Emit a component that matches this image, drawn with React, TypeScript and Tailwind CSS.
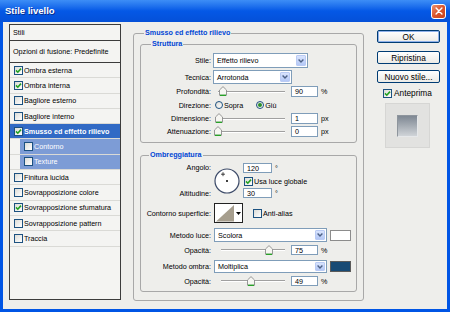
import React from "react";

function Check({ checked = false }: { checked?: boolean }) {
  return (
    <span className="relative inline-flex shrink-0 w-[9px] h-[9px] border border-[#1C5180] bg-gradient-to-br from-[#DCDCD7] to-white">
      {checked && (
        <svg viewBox="0 0 7 7" className="absolute left-0 top-0 w-[7px] h-[7px]">
          <path d="M1 3.4 L2.8 5.2 L6 1.6" fill="none" stroke="#21A121" strokeWidth="1.6" />
        </svg>
      )}
    </span>
  );
}

function Radio({ on = false }: { on?: boolean }) {
  return (
    <span className="inline-flex shrink-0 w-[8px] h-[8px] rounded-full border border-[#1C5180] bg-gradient-to-br from-[#DCDCD7] to-white items-center justify-center">
      {on && <span className="w-[4px] h-[4px] rounded-full bg-[#2A8F2A]" />}
    </span>
  );
}

function Dropdown({ text, cls }: { text: string; cls: string }) {
  return (
    <div className={`flex items-stretch bg-white border border-[#7F9DB9] ${cls}`}>
      <span className="flex-1 flex items-center pl-[3px] whitespace-nowrap overflow-hidden">{text}</span>
      <span className="w-[10px] m-[1px] flex items-center justify-center rounded-[1px] bg-gradient-to-b from-[#D9E4FD] to-[#B4C8F6] border border-[#BACBF4]">
        <svg viewBox="0 0 6 4" className="w-[6px] h-[4px]">
          <path d="M0.6 0.6 L3 3 L5.4 0.6" stroke="#4D6185" strokeWidth="1.4" fill="none" />
        </svg>
      </span>
    </div>
  );
}

function Slider({ cls, pos }: { cls: string; pos: number }) {
  return (
    <div className={`relative h-full shrink-0 ${cls}`}>
      <div className="absolute left-[3px] right-0 top-1/2 -mt-px h-[2px] border-t border-[#A0A0A0] border-b border-b-white" />
      <svg className="absolute top-0 w-[8px] h-[10px]" style={{ left: pos - 4 }} viewBox="0 0 8 10">
        <path d="M0.5 9.3 V4 L4 0.6 L7.5 4 V9.3 Z" fill="#F6F6F2" stroke="#8C8C8C" strokeWidth="0.9" />
        <path d="M1 9.3 H7" stroke="#21A121" strokeWidth="1.3" />
      </svg>
    </div>
  );
}

function Num({ v, cls }: { v: string; cls: string }) {
  return (
    <div className={`flex items-center shrink-0 bg-white border border-[#7F9DB9] pl-[3px] ${cls}`}>{v}</div>
  );
}

function Label({ children }: { children: React.ReactNode }) {
  return <div className="w-[70px] shrink-0 text-right whitespace-nowrap">{children}</div>;
}

const items: { t: string; c?: boolean; sel?: boolean; sub?: boolean }[] = [
  { t: "Ombra esterna", c: true },
  { t: "Ombra interna", c: true },
  { t: "Bagliore esterno" },
  { t: "Bagliore interno" },
  { t: "Smusso ed effetto rilievo", c: true, sel: true },
  { t: "Contorno", sub: true },
  { t: "Texture", sub: true },
  { t: "Finitura lucida" },
  { t: "Sovrapposizione colore" },
  { t: "Sovrapposizione sfumatura", c: true },
  { t: "Sovrapposizione pattern" },
  { t: "Traccia" },
];

function LeftPanel() {
  return (
    <div className="w-[112px] h-[276px] shrink-0 border border-[#3C3C3C] bg-[#F4F4F2] flex flex-col">
      <div className="h-[16px] shrink-0 flex items-center pl-[3px] border-b border-[#3C3C3C]">Stili</div>
      <div className="h-[22px] shrink-0 flex items-center pl-[3px] border-b border-[#3C3C3C] whitespace-nowrap">
        Opzioni di fusione: Predefinite
      </div>
      {items.map((it) =>
        it.sub ? (
          <div key={it.t} className="h-[15.3px] shrink-0 flex pl-[10px] border-b border-[#DADAD6]">
            <div className="flex-1 flex items-center gap-[1px] pl-[4px] bg-[#7D9CD6] text-white">
              <Check checked={it.c} />
              <span>{it.t}</span>
            </div>
          </div>
        ) : (
          <div
            key={it.t}
            className={
              it.sel
                ? "h-[15.3px] shrink-0 flex items-center gap-[1px] pl-[4px] bg-[#316AC5] text-white font-bold border-b border-[#DADAD6] whitespace-nowrap"
                : "h-[15.3px] shrink-0 flex items-center gap-[1px] pl-[4px] border-b border-[#DADAD6] whitespace-nowrap"
            }
          >
            <Check checked={it.c} />
            <span>{it.t}</span>
          </div>
        )
      )}
    </div>
  );
}

function AngleDial() {
  return (
    <svg viewBox="0 0 26 26" className="w-[26px] h-[26px] shrink-0 mt-[7px] ml-[3px]">
      <circle cx="13" cy="13" r="12" fill="#FFFFFF" stroke="#3D4B69" strokeWidth="1.2" />
      <circle cx="13" cy="13" r="1" fill="#000" />
      <path d="M9 4.2 V8.2 M7 6.2 H11" stroke="#000" strokeWidth="0.7" />
    </svg>
  );
}

function ContourBox() {
  return (
    <div className="ml-[3px] w-[29px] h-[20px] shrink-0 border border-[#222] bg-white flex">
      <svg viewBox="0 0 20 18" className="w-[20px] h-[18px]">
        <path d="M1 17.5 L19 1 V17.5 Z" fill="#A69E8E" />
      </svg>
      <div className="flex-1 flex items-center justify-center">
        <svg viewBox="0 0 5 3" className="w-[5px] h-[3px]">
          <path d="M0 0 H5 L2.5 3 Z" fill="#000" />
        </svg>
      </div>
    </div>
  );
}

function Middle() {
  return (
    <fieldset className="mt-[4px] ml-[12px] w-[231px] shrink-0 border border-[#A8A8A8] rounded-[3px] px-[6px] pb-[8px]">
      <legend className="ml-[4px] px-[1px] leading-[10px] font-bold text-[#0046D5]">Smusso ed effetto rilievo</legend>

      <fieldset className="mt-[1px] border border-[#A8A8A8] rounded-[3px] px-0 pt-[4px] pb-[5px]">
        <legend className="ml-[10px] px-[1px] leading-[10px] font-bold text-[#0046D5]">Struttura</legend>
        <div className="flex items-center h-[15px]">
          <Label>Stile:</Label>
          <Dropdown text="Effetto rilievo" cls="ml-[2px] w-[95px] h-[15px]" />
        </div>
        <div className="flex items-center h-[14px] mt-[2px]">
          <Label>Tecnica:</Label>
          <Dropdown text="Arrotonda" cls="ml-[2px] w-[79px] h-[14px]" />
        </div>
        <div className="flex items-center h-[11px] mt-[2px]">
          <Label>Profondità:</Label>
          <Slider cls="ml-[4px] w-[70px]" pos={8} />
          <Num v="90" cls="ml-[6px] w-[27px] h-[11px]" />
          <span className="ml-[3px]">%</span>
        </div>
        <div className="flex items-center h-[12px] mt-[2px]">
          <Label>Direzione:</Label>
          <span className="ml-[4px] flex items-center gap-[1px]">
            <Radio />
            <span>Sopra</span>
          </span>
          <span className="ml-[13px] flex items-center gap-[1px]">
            <Radio on />
            <span>Giù</span>
          </span>
        </div>
        <div className="flex items-center h-[11px] mt-[2px]">
          <Label>Dimensione:</Label>
          <Slider cls="ml-[4px] w-[70px]" pos={4} />
          <Num v="1" cls="ml-[6px] w-[27px] h-[11px]" />
          <span className="ml-[3px]">px</span>
        </div>
        <div className="flex items-center h-[11px] mt-[2px]">
          <Label>Attenuazione:</Label>
          <Slider cls="ml-[4px] w-[70px]" pos={3} />
          <Num v="0" cls="ml-[6px] w-[27px] h-[11px]" />
          <span className="ml-[3px]">px</span>
        </div>
      </fieldset>

      <fieldset className="mt-[7px] border border-[#A8A8A8] rounded-[3px] px-0 pb-[5px]">
        <legend className="ml-[8px] px-[1px] leading-[10px] font-bold text-[#0046D5]">Ombreggiatura</legend>
        <div className="flex items-start h-[38px] mt-[1px]">
          <div className="w-[70px] shrink-0 text-right flex flex-col">
            <div className="h-[9px] mt-[2px]">Angolo:</div>
            <div className="h-[9px] mt-[17px]">Altitudine:</div>
          </div>
          <AngleDial />
          <div className="ml-[3px] flex flex-col">
            <div className="flex items-center mt-[2px] h-[10px]">
              <Num v="120" cls="w-[29px] h-[10px]" />
              <span className="ml-[3px]">°</span>
            </div>
            <div className="flex items-center gap-[1px] mt-[3px] h-[10px] ml-[1px] whitespace-nowrap">
              <Check checked />
              <span>Usa luce globale</span>
            </div>
            <div className="flex items-center mt-[2px] h-[10px]">
              <Num v="30" cls="w-[29px] h-[10px]" />
              <span className="ml-[3px]">°</span>
            </div>
          </div>
        </div>
        <div className="flex items-center h-[20px] mt-[4px]">
          <Label>Contorno superficie:</Label>
          <ContourBox />
          <span className="ml-[10px] flex items-center gap-[1px]">
            <Check />
            <span>Anti-alias</span>
          </span>
        </div>
        <div className="flex items-center h-[14px] mt-[5px]">
          <Label>Metodo luce:</Label>
          <Dropdown text="Scolora" cls="ml-[3px] w-[113px] h-[14px]" />
          <div className="ml-[3px] w-[21px] h-[11px] border border-[#8C8C8C] bg-white" />
        </div>
        <div className="flex items-center h-[10px] mt-[3px]">
          <Label>Opacità:</Label>
          <Slider cls="ml-[7px] w-[67px]" pos={51} />
          <Num v="75" cls="ml-[6px] w-[27px] h-[10px]" />
          <span className="ml-[3px]">%</span>
        </div>
        <div className="flex items-center h-[13px] mt-[5px]">
          <Label>Metodo ombra:</Label>
          <Dropdown text="Moltiplica" cls="ml-[3px] w-[113px] h-[13px]" />
          <div className="ml-[3px] w-[21px] h-[11px] border border-[#5A5A5A] bg-[#184A74]" />
        </div>
        <div className="flex items-center h-[10px] mt-[3px]">
          <Label>Opacità:</Label>
          <Slider cls="ml-[7px] w-[67px]" pos={33} />
          <Num v="49" cls="ml-[6px] w-[27px] h-[10px]" />
          <span className="ml-[3px]">%</span>
        </div>
      </fieldset>
    </fieldset>
  );
}

function Btn({ children, primary = false }: { children: React.ReactNode; primary?: boolean }) {
  return (
    <div
      className={
        primary
          ? "h-[13px] w-[63px] flex items-center justify-center rounded-[2px] border border-[#003C74] bg-gradient-to-b from-white to-[#ECEBE6] shadow-[inset_0_0_0_1px_#8FB1EA]"
          : "h-[13px] w-[63px] flex items-center justify-center rounded-[2px] border border-[#003C74] bg-gradient-to-b from-white to-[#ECEBE6]"
      }
    >
      {children}
    </div>
  );
}

function Right() {
  return (
    <div className="mt-[6px] ml-[13px] w-[63px] shrink-0 flex flex-col text-[8.3px] leading-[10px]">
      <Btn primary>OK</Btn>
      <div className="mt-[8px]">
        <Btn>Ripristina</Btn>
      </div>
      <div className="mt-[6px]">
        <Btn>Nuovo stile...</Btn>
      </div>
      <div className="mt-[5px] h-[10px] pl-[6px] flex items-center gap-[2px]">
        <Check checked />
        <span>Anteprima</span>
      </div>
      <div className="mt-[5px] ml-[8px] w-[45px] h-[45px] bg-[#E2E2E0] border border-[#D6D6D4] flex items-center justify-center">
        <div className="w-[21px] h-[22px] border-t border-l border-t-[#8E959D] border-l-[#8E959D] border-r border-b border-r-[#E6E8EA] border-b-[#E6E8EA] bg-gradient-to-b from-[#7F8893] to-[#D0D4D8]" />
      </div>
    </div>
  );
}

export default function App() {
  return (
    <div className="w-[450px] h-[312px] bg-[#0055E5] flex flex-col overflow-hidden font-['Liberation_Sans',Arial,sans-serif] text-[7.2px] leading-[9px] text-black">
      <div className="h-[22px] shrink-0 flex items-center justify-between pl-[5px] pr-[4px] bg-gradient-to-b from-[#3D8EF6] via-[#0458E6] to-[#0450D8]">
        <span className="text-white font-bold text-[9.5px] leading-[12px] [text-shadow:1px_1px_0_#0A2F8C]">Stile livello</span>
        <div className="w-[15px] h-[15px] rounded-[3px] border border-white bg-gradient-to-br from-[#E9906F] via-[#D9542C] to-[#C8421C] flex items-center justify-center">
          <svg viewBox="0 0 9 9" className="w-[8px] h-[8px]">
            <path d="M1.2 1.2 L7.8 7.8 M7.8 1.2 L1.2 7.8" stroke="#fff" strokeWidth="1.6" strokeLinecap="round" />
          </svg>
        </div>
      </div>
      <div className="flex-1 mx-[3px] mb-[3px] bg-[#EEEEEB] flex items-start pl-[6px] pt-[2px]">
        <LeftPanel />
        <Middle />
        <Right />
      </div>
    </div>
  );
}
